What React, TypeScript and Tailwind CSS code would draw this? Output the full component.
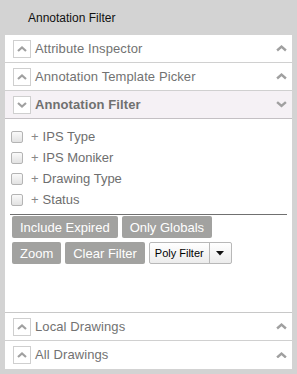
import type { ReactNode } from 'react'

const font = { fontFamily: '"Liberation Sans", Arial, sans-serif' }

function Chevron({ up, size = 10 }: { up: boolean; size?: number }) {
  return (
    <svg width={size} height={size * 0.6} viewBox="0 0 10 6">
      <polyline
        points={up ? '1,5 5,1.5 9,5' : '1,1 5,4.5 9,1'}
        fill="none"
        stroke="#a0a0a0"
        strokeWidth="2.2"
      />
    </svg>
  )
}

function SectionHeader({ title, open = false }: { title: string; open?: boolean }) {
  return (
    <div
      className={`flex items-center h-[28px] border-b pl-[8px] pr-[5px] ${
        open ? 'bg-[#f5f1f5] border-[#c4c0c4]' : 'bg-white border-[#d0d0d0]'
      }`}
    >
      <div className="w-[18px] h-[18px] border border-[#cfcfcf] bg-white flex items-center justify-center">
        <Chevron up={!open} />
      </div>
      <span
        className={`ml-[4px] text-[13px] flex-1 tracking-[0.1px] ${open ? 'font-bold text-[#707070]' : 'text-[#727272]'}`}
      >
        {title}
      </span>
      <Chevron up={!open} size={11} />
    </div>
  )
}

function GrayButton({ children }: { children: ReactNode }) {
  return (
    <button className="h-[22px] px-[8px] rounded-[2px] bg-[#a2a2a0] text-white text-[13px] leading-none">
      {children}
    </button>
  )
}

const filters = ['IPS Type', 'IPS Moniker', 'Drawing Type', 'Status']

export default function App() {
  return (
    <div className="w-[297px] h-[374px] bg-[#d3d3d3] flex flex-col" style={font}>
      <div className="h-[35px] flex items-center pl-[28px] text-[12px] text-[#111]">Annotation Filter</div>
      <div className="mx-[5px] flex-1 bg-white flex flex-col">
        <SectionHeader title="Attribute Inspector" />
        <SectionHeader title="Annotation Template Picker" />
        <SectionHeader title="Annotation Filter" open />
        <div className="flex-1 px-[5px] pt-[7px]">
          <div className="flex flex-col">
            {filters.map((f) => (
              <label key={f} className="flex items-center h-[21px] text-[13px] text-[#6e6e6e]">
                <span className="w-[12px] h-[12px] ml-[1px] rounded-[2px] border border-[#b4b4b4] bg-gradient-to-b from-[#fafafa] to-[#e2e2e2]" />
                <span className="ml-[8px] text-[#888]">+</span>
                <span className="ml-[4px]">{f}</span>
              </label>
            ))}
          </div>
          <div className="mt-[4px] border-t border-[#707070]" />
          <div className="flex gap-[4px] mt-[1px] pl-[2px]">
            <GrayButton>Include Expired</GrayButton>
            <GrayButton>Only Globals</GrayButton>
          </div>
          <div className="flex gap-[4px] mt-[4px] pl-[2px]">
            <GrayButton>Zoom</GrayButton>
            <GrayButton>Clear Filter</GrayButton>
            <div className="flex h-[22px] border border-[#b8b8b8] rounded-[2px] bg-gradient-to-b from-white to-[#ececec]">
              <span className="px-[5px] flex items-center text-[11px] text-black">Poly Filter</span>
              <span className="w-[22px] border-l border-[#b8b8b8] flex items-center justify-center">
                <svg width="8" height="5" viewBox="0 0 8 5">
                  <polygon points="0,0 8,0 4,4.5" fill="#111" />
                </svg>
              </span>
            </div>
          </div>
        </div>
        <div className="border-t border-[#c8c8c8]">
          <SectionHeader title="Local Drawings" />
          <div className="[&>div]:border-b-0">
            <SectionHeader title="All Drawings" />
          </div>
        </div>
      </div>
      <div className="h-[5px]" />
    </div>
  )
}
